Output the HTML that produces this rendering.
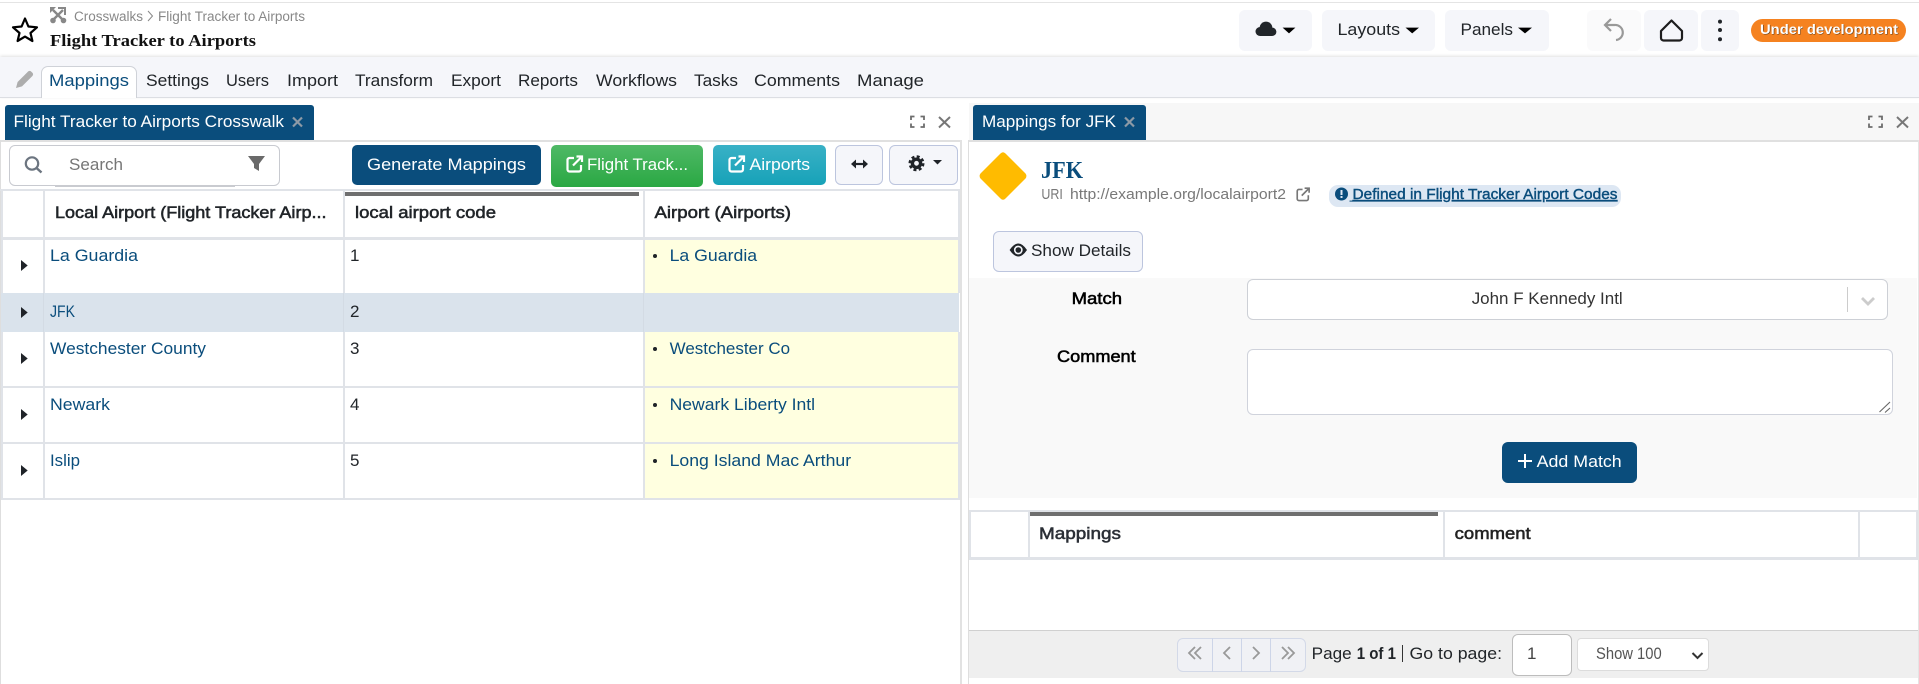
<!DOCTYPE html>
<html lang="en">
<head>
<meta charset="utf-8">
<title>Flight Tracker to Airports</title>
<style>
html,body{margin:0;padding:0;width:1919px;height:684px;overflow:hidden;background:#fff}
.b{position:absolute;box-sizing:border-box}
.nb{background:#0a4d7c;border-radius:5px}
.lt{background:#f5f6fa;border-radius:6px}
.ol{background:#f5f6fa;border:1px solid #bcc5de;border-radius:6px}
.g{background:#e0e3e8}
svg{position:absolute;left:0;top:0}
text{font-family:"Liberation Sans",sans-serif;font-size:17px;fill:#212529;white-space:pre}
.w{fill:#fff}
.a{fill:#0a4d7c}
.h{fill:#212529;stroke:#212529;stroke-width:.55px}
.s{font-family:"Liberation Serif",serif;font-weight:700}
</style>
</head>
<body>
<!-- header -->
<div class="b" style="left:0;top:2px;width:1919px;height:1px;background:#e4e4e4"></div>
<div class="b" style="left:0;top:57px;width:1919px;height:41px;background:#f5f6fa;border-bottom:1px solid #dcdee3;box-shadow:0 -1px 3px rgba(0,0,0,.12)"></div>
<div class="b" style="left:41px;top:66px;width:96px;height:32px;background:#fff;border:1px solid #cfd2d8;border-bottom:none;border-radius:7px 7px 0 0"></div>
<div class="b lt" style="left:1239px;top:10px;width:73px;height:41px"></div>
<div class="b lt" style="left:1322px;top:10px;width:113px;height:41px"></div>
<div class="b lt" style="left:1445px;top:10px;width:104px;height:41px"></div>
<div class="b" style="left:1587px;top:10px;width:54px;height:41px;background:#fafafb;border-radius:6px"></div>
<div class="b lt" style="left:1644px;top:10px;width:54px;height:41px"></div>
<div class="b lt" style="left:1701px;top:10px;width:38px;height:41px"></div>
<div class="b" style="left:1751px;top:19px;width:155px;height:23px;background:#f58220;border-radius:12px"></div>

<!-- left panel -->
<div class="b" style="left:5px;top:105px;width:309px;height:35px;background:#0a4d7c;border-radius:3px 3px 0 0"></div>
<div class="b" style="left:0;top:140px;width:962px;height:2px;background:#e0e0e0"></div>
<div class="b" style="left:960px;top:140px;width:2px;height:544px;background:#e2e2e2"></div>
<div class="b" style="left:0;top:140px;width:1px;height:544px;background:#dedede"></div>
<div class="b" style="left:9px;top:145px;width:271px;height:41px;border:1px solid #c8cad0;border-radius:6px;background:#fff"></div>
<div class="b" style="left:55px;top:185px;width:180px;height:2px;background:#c9cbd0"></div>
<div class="b nb" style="left:352px;top:145px;width:189px;height:40px"></div>
<div class="b" style="left:551px;top:145px;width:152px;height:42px;border-radius:5px;background:linear-gradient(#4fb966,#2aa843)"></div>
<div class="b" style="left:713px;top:145px;width:113px;height:40px;border-radius:5px;background:linear-gradient(#39b1c6,#17a2b8)"></div>
<div class="b ol" style="left:835px;top:145px;width:48px;height:40px"></div>
<div class="b ol" style="left:889px;top:145px;width:69px;height:40px"></div>

<!-- left table -->
<div class="b g" style="left:0;top:189px;width:960px;height:2px"></div>
<div class="b g" style="left:1px;top:237px;width:958px;height:3px"></div>
<div class="b" style="left:645px;top:240px;width:313px;height:53px;background:#ffffe0"></div>
<div class="b" style="left:1px;top:293px;width:958px;height:39px;background:#dae3ec"></div>
<div class="b" style="left:645px;top:332px;width:313px;height:54px;background:#ffffe0"></div>
<div class="b" style="left:645px;top:388px;width:313px;height:54px;background:#ffffe0"></div>
<div class="b" style="left:645px;top:444px;width:313px;height:54px;background:#ffffe0"></div>
<div class="b g" style="left:1px;top:386px;width:958px;height:2px"></div>
<div class="b g" style="left:1px;top:442px;width:958px;height:2px"></div>
<div class="b g" style="left:1px;top:498px;width:958px;height:2px"></div>
<div class="b g" style="left:1px;top:191px;width:2px;height:102px"></div>
<div class="b g" style="left:1px;top:332px;width:2px;height:168px"></div>
<div class="b g" style="left:43px;top:191px;width:2px;height:102px"></div>
<div class="b g" style="left:43px;top:332px;width:2px;height:168px"></div>
<div class="b g" style="left:343px;top:191px;width:2px;height:102px"></div>
<div class="b g" style="left:343px;top:332px;width:2px;height:168px"></div>
<div class="b g" style="left:643px;top:191px;width:2px;height:102px"></div>
<div class="b g" style="left:643px;top:332px;width:2px;height:168px"></div>
<div class="b g" style="left:958px;top:191px;width:2px;height:102px"></div>
<div class="b g" style="left:958px;top:332px;width:2px;height:168px"></div>
<div class="b" style="left:43px;top:293px;width:1px;height:39px;background:#d3dbe4"></div>
<div class="b" style="left:343px;top:293px;width:1px;height:39px;background:#d3dbe4"></div>
<div class="b" style="left:643px;top:293px;width:1px;height:39px;background:#d3dbe4"></div>
<div class="b" style="left:345px;top:192px;width:294px;height:4px;background:#6f6f6f"></div>

<!-- right panel -->
<div class="b" style="left:969px;top:103px;width:950px;height:37px;background:#f7f7f7"></div>
<div class="b" style="left:973px;top:105px;width:173px;height:35px;background:#0a4d7c;border-radius:3px 3px 0 0"></div>
<div class="b" style="left:969px;top:140px;width:950px;height:2px;background:#e0e0e0"></div>
<div class="b" style="left:968px;top:140px;width:1px;height:544px;background:#dedede"></div>
<div class="b" style="left:1918px;top:140px;width:1px;height:544px;background:#e4e4e4"></div>
<div class="b" style="left:1329px;top:185px;width:292px;height:22px;background:#dde7f3;border-radius:9px"></div>
<div class="b ol" style="left:993px;top:231px;width:150px;height:41px"></div>
<div class="b" style="left:969px;top:278px;width:948px;height:220px;background:#f9f9f9"></div>
<div class="b" style="left:1247px;top:279px;width:641px;height:41px;background:#fff;border:1px solid #cdd0d6;border-radius:6px"></div>
<div class="b" style="left:1847px;top:287px;width:1px;height:25px;background:#ccc"></div>
<div class="b" style="left:1247px;top:349px;width:646px;height:66px;background:#fff;border:1px solid #d0d3dc;border-radius:6px"></div>
<div class="b nb" style="left:1502px;top:442px;width:135px;height:41px;border-radius:6px"></div>

<!-- right table -->
<div class="b g" style="left:969px;top:510px;width:949px;height:2px"></div>
<div class="b g" style="left:969px;top:557px;width:949px;height:3px"></div>
<div class="b g" style="left:969px;top:510px;width:2px;height:49px"></div>
<div class="b g" style="left:1028px;top:510px;width:2px;height:49px"></div>
<div class="b g" style="left:1443px;top:510px;width:2px;height:49px"></div>
<div class="b g" style="left:1858px;top:510px;width:2px;height:49px"></div>
<div class="b g" style="left:1916px;top:510px;width:2px;height:49px"></div>
<div class="b" style="left:1030px;top:512px;width:408px;height:4px;background:#6f6f6f"></div>

<!-- footer -->
<div class="b" style="left:969px;top:630px;width:949px;height:48px;background:#efefef;border-top:1px solid #d0d0d0"></div>
<div class="b" style="left:1177px;top:638px;width:129px;height:34px;background:#f0f1f5;border:1px solid #d3d9e8;border-radius:6px"></div>
<div class="b" style="left:1212px;top:638px;width:1px;height:34px;background:#cdd5e8"></div>
<div class="b" style="left:1241px;top:638px;width:1px;height:34px;background:#cdd5e8"></div>
<div class="b" style="left:1270px;top:638px;width:1px;height:34px;background:#cdd5e8"></div>
<div class="b" style="left:1512px;top:634px;width:60px;height:42px;background:#fff;border:1px solid #bdbdbd;border-radius:6px"></div>
<div class="b" style="left:1577px;top:638px;width:132px;height:33px;background:#fff;border:1px solid #dcdcdc;border-radius:4px"></div>

<svg width="1919" height="684" viewBox="0 0 1919 684" xmlns="http://www.w3.org/2000/svg">
<!-- header -->
<polygon points="25,18.5 28.4,26.5 37,27.3 30.5,33 32.4,41 25,36.6 17.6,41 19.5,33 13,27.3 21.6,26.5" fill="none" stroke="#000" stroke-width="2.2" stroke-linejoin="round"/>
<g stroke="#888" stroke-width="2.4" fill="none">
<path d="M53 10 L63 20 M63 10 L53 20"/>
<path d="M58 8 H65 V15" stroke-width="2"/>
</g>
<g fill="#888"><polygon points="50,7 56,7 50,13"/><circle cx="53" cy="20.5" r="2.8"/><circle cx="63.5" cy="20.5" r="2.8"/></g>
<text x="74" y="21" style="font-size:13.5px;fill:#888" textLength="69" lengthAdjust="spacingAndGlyphs">Crosswalks</text>
<path d="M148 11 l4.5 5 l-4.5 5" fill="none" stroke="#888" stroke-width="1"/>
<text x="158" y="21" style="font-size:13.5px;fill:#888" textLength="147" lengthAdjust="spacingAndGlyphs">Flight Tracker to Airports</text>
<text class="s" x="50" y="46" style="font-size:17px;fill:#111" textLength="206" lengthAdjust="spacingAndGlyphs">Flight Tracker to Airports</text>

<path d="M16 88 l1.6-6 l10.4-10.4 q1.6-1.4 3.2 0 l1.2 1.2 q1.4 1.6 0 3.2 l-10.4 10.4 z" fill="#adadad"/>
<text class="a" x="49" y="86" textLength="80" lengthAdjust="spacingAndGlyphs">Mappings</text>
<text x="146" y="86" textLength="63" lengthAdjust="spacingAndGlyphs">Settings</text>
<text x="226" y="86" textLength="43" lengthAdjust="spacingAndGlyphs">Users</text>
<text x="287" y="86" textLength="51" lengthAdjust="spacingAndGlyphs">Import</text>
<text x="355" y="86" textLength="78" lengthAdjust="spacingAndGlyphs">Transform</text>
<text x="451" y="86" textLength="50" lengthAdjust="spacingAndGlyphs">Export</text>
<text x="518" y="86" textLength="60" lengthAdjust="spacingAndGlyphs">Reports</text>
<text x="596" y="86" textLength="81" lengthAdjust="spacingAndGlyphs">Workflows</text>
<text x="694" y="86" textLength="44" lengthAdjust="spacingAndGlyphs">Tasks</text>
<text x="754" y="86" textLength="86" lengthAdjust="spacingAndGlyphs">Comments</text>
<text x="857" y="86" textLength="67" lengthAdjust="spacingAndGlyphs">Manage</text>

<!-- top right -->
<g fill="#212529"><circle cx="1260" cy="31.5" r="4.5"/><circle cx="1266" cy="28" r="6.4"/><circle cx="1272.2" cy="31.8" r="4.2"/><rect x="1260" y="30" width="12" height="6"/></g>
<polygon points="1282.6,27.6 1295.4,27.6 1289,33.4" fill="#000"/>
<text x="1337.5" y="35" textLength="62.5" lengthAdjust="spacingAndGlyphs">Layouts</text>
<polygon points="1405.5,27.6 1419,27.6 1412.2,33.4" fill="#000"/>
<text x="1460.5" y="35" textLength="52.5" lengthAdjust="spacingAndGlyphs">Panels</text>
<polygon points="1518,27.6 1532,27.6 1525,33.4" fill="#000"/>
<path d="M1611 19 L1605 25 L1611 31 M1605 25 H1614.5 a7.5 7.5 0 0 1 1.5 15" fill="none" stroke="#999" stroke-width="2.2"/>
<path d="M1661 31 L1671.5 20.5 L1682 31 V38 a2.5 2.5 0 0 1-2.5 2.5 H1663.5 a2.5 2.5 0 0 1-2.5-2.5 Z" fill="none" stroke="#1d1d1d" stroke-width="2.2" stroke-linejoin="round"/>
<circle cx="1720" cy="21.6" r="2" fill="#212529"/><circle cx="1720" cy="30" r="2" fill="#212529"/><circle cx="1720" cy="39.3" r="2" fill="#212529"/>
<text x="1760.6" y="34.6" style="font-size:14px;font-weight:700;fill:#5a3a1a" textLength="138" lengthAdjust="spacingAndGlyphs">Under development</text>
<text x="1760" y="34" style="font-size:14px;font-weight:700;fill:#fff" textLength="138" lengthAdjust="spacingAndGlyphs">Under development</text>

<!-- left tab strip -->
<text class="w" x="13.5" y="127" textLength="270.5" lengthAdjust="spacingAndGlyphs">Flight Tracker to Airports Crosswalk</text>
<path d="M293 117.5 L302 126.5 M302 117.5 L293 126.5" stroke="#8d9aa6" stroke-width="2.2"/>
<path d="M911 120 v-3.5 h3.5 M920.5 116.5 h3.5 v3.5 M924 123.5 v3.5 h-3.5 M914.5 127 h-3.5 v-3.5" fill="none" stroke="#6d6d6d" stroke-width="1.8"/>
<path d="M939 117 L950 127.5 M950 117 L939 127.5" stroke="#777" stroke-width="2"/>

<!-- toolbar -->
<circle cx="32" cy="163.5" r="6.2" fill="none" stroke="#6c7580" stroke-width="2.2"/>
<path d="M36.5 168 L41.5 172.5" stroke="#6c7580" stroke-width="2.4"/>
<text x="69" y="170" style="fill:#767676" textLength="54" lengthAdjust="spacingAndGlyphs">Search</text>
<polygon points="248,156 265,156 259,164 259,171 254,168 254,164" fill="#6a6a6a"/>
<text class="w" x="367" y="170" textLength="159" lengthAdjust="spacingAndGlyphs">Generate Mappings</text>
<g transform="translate(566,155)" fill="none" stroke="#fff" stroke-width="2.2"><path d="M8 3H3.5a2 2 0 0 0-2 2v9.5a2 2 0 0 0 2 2H13a2 2 0 0 0 2-2V10 M7 10.5 L15.5 2 M10.5 1.5h5.5v5.5"/></g>
<text class="w" x="587" y="170" textLength="101" lengthAdjust="spacingAndGlyphs">Flight Track...</text>
<g transform="translate(728,155)" fill="none" stroke="#fff" stroke-width="2.2"><path d="M8 3H3.5a2 2 0 0 0-2 2v9.5a2 2 0 0 0 2 2H13a2 2 0 0 0 2-2V10 M7 10.5 L15.5 2 M10.5 1.5h5.5v5.5"/></g>
<text class="w" x="749.5" y="170" textLength="60.5" lengthAdjust="spacingAndGlyphs">Airports</text>
<path d="M854 164 H865" stroke="#1f2328" stroke-width="2.2"/>
<polygon points="851,164 856,159.5 856,168.5" fill="#1f2328"/><polygon points="868,164 863,159.5 863,168.5" fill="#1f2328"/>
<circle cx="916.5" cy="163.3" r="5.8" fill="#1f2328"/>
<circle cx="916.5" cy="163.3" r="6.8" fill="none" stroke="#1f2328" stroke-width="2.4" stroke-dasharray="3 2.34"/>
<circle cx="916.5" cy="163.3" r="2.4" fill="#f5f6fa"/>
<polygon points="933,160 942,160 937.5,164.5" fill="#1f2328"/>

<!-- left table text -->
<text class="h" x="55" y="218" textLength="271.5" lengthAdjust="spacingAndGlyphs">Local Airport (Flight Tracker Airp...</text>
<text class="h" x="355" y="218" textLength="141" lengthAdjust="spacingAndGlyphs">local airport code</text>
<text class="h" x="654.5" y="218" textLength="136.5" lengthAdjust="spacingAndGlyphs">Airport (Airports)</text>

<g fill="#1f2328">
<polygon points="21,260 27.7,265.5 21,271"/><polygon points="21,307 27.7,312.5 21,318"/><polygon points="21,353 27.7,358.5 21,364"/><polygon points="21,409 27.7,414.5 21,420"/><polygon points="21,465 27.7,470.5 21,476"/>
<circle cx="655" cy="256" r="2"/><circle cx="655" cy="349" r="2"/><circle cx="655" cy="405" r="2"/><circle cx="655" cy="461" r="2"/>
</g>
<text class="a" x="50" y="261" textLength="88" lengthAdjust="spacingAndGlyphs">La Guardia</text>
<text class="a" x="50" y="317" textLength="25" lengthAdjust="spacingAndGlyphs">JFK</text>
<text class="a" x="50" y="354" textLength="156" lengthAdjust="spacingAndGlyphs">Westchester County</text>
<text class="a" x="50" y="410" textLength="60" lengthAdjust="spacingAndGlyphs">Newark</text>
<text class="a" x="50" y="466" textLength="30" lengthAdjust="spacingAndGlyphs">Islip</text>
<text x="350" y="261">1</text>
<text x="350" y="317">2</text>
<text x="350" y="354">3</text>
<text x="350" y="410">4</text>
<text x="350" y="466">5</text>
<text class="a" x="669.6" y="261" textLength="87.5" lengthAdjust="spacingAndGlyphs">La Guardia</text>
<text class="a" x="669.6" y="354" textLength="120.5" lengthAdjust="spacingAndGlyphs">Westchester Co</text>
<text class="a" x="669.6" y="410" textLength="145.5" lengthAdjust="spacingAndGlyphs">Newark Liberty Intl</text>
<text class="a" x="669.6" y="466" textLength="181.5" lengthAdjust="spacingAndGlyphs">Long Island Mac Arthur</text>

<!-- right panel -->
<text class="w" x="982" y="127" textLength="134" lengthAdjust="spacingAndGlyphs">Mappings for JFK</text>
<path d="M1125 117.5 L1134 126.5 M1134 117.5 L1125 126.5" stroke="#8d9aa6" stroke-width="2.2"/>
<path d="M1869 120 v-3.5 h3.5 M1878.5 116.5 h3.5 v3.5 M1882 123.5 v3.5 h-3.5 M1872.5 127 h-3.5 v-3.5" fill="none" stroke="#6d6d6d" stroke-width="1.8"/>
<path d="M1897 117 L1908 127.5 M1908 117 L1897 127.5" stroke="#777" stroke-width="2"/>

<path d="M1000.5 153.5 q2.5-2.5 5 0 L1025.5 173.5 q1.8 2.5 0 5 L1005.5 198.5 q-2.5 2.5-5 0 L980.5 178.5 q-1.8-2.5 0-5 Z" fill="#ffbb00"/>
<text class="s a" x="1041" y="178" style="font-size:24px" textLength="42" lengthAdjust="spacingAndGlyphs">JFK</text>
<text x="1041.4" y="199" style="font-size:14.5px;fill:#787878" textLength="21.5" lengthAdjust="spacingAndGlyphs">URI</text>
<text x="1070" y="199" style="font-size:14.5px;fill:#787878" textLength="216" lengthAdjust="spacingAndGlyphs">http://example.org/localairport2</text>
<g transform="translate(1296,187) scale(.82)" fill="none" stroke="#777" stroke-width="2"><path d="M8 3H3.5a2 2 0 0 0-2 2v9.5a2 2 0 0 0 2 2H13a2 2 0 0 0 2-2V10 M7 10.5 L15.5 2 M10.5 1.5h5.5v5.5"/></g>
<circle cx="1341.5" cy="194" r="6.5" fill="#0a4d7c"/>
<rect x="1340.5" y="190" width="2" height="5" fill="#dde7f3"/><rect x="1340.5" y="196" width="2" height="2" fill="#dde7f3"/>
<rect x="1349.5" y="200.6" width="3" height="1" fill="#0a4d7c"/>
<text x="1352.5" y="199" style="font-size:14.5px;fill:#0a4d7c;stroke:#0a4d7c;stroke-width:.4px;text-decoration:underline" textLength="265" lengthAdjust="spacingAndGlyphs">Defined in Flight Tracker Airport Codes</text>

<path d="M1009.6 250 Q1018.3 237 1027 250 Q1018.3 263 1009.6 250 Z" fill="#212529"/>
<circle cx="1018.3" cy="250" r="4.4" fill="#f5f6fa"/><circle cx="1018.3" cy="250" r="2.8" fill="#212529"/>
<text x="1031" y="256" textLength="100" lengthAdjust="spacingAndGlyphs">Show Details</text>

<text x="1071.6" y="304" style="fill:#000;stroke:#000;stroke-width:.55px" textLength="50.4" lengthAdjust="spacingAndGlyphs">Match</text>
<text x="1471.7" y="304" style="fill:#333" textLength="151" lengthAdjust="spacingAndGlyphs">John F Kennedy Intl</text>
<path d="M1862 298 L1868 304 L1874 298" fill="none" stroke="#ccc" stroke-width="2.8"/>
<text x="1057" y="362" style="fill:#000;stroke:#000;stroke-width:.55px" textLength="78.7" lengthAdjust="spacingAndGlyphs">Comment</text>
<path d="M1879.5 412 L1890 402 M1885 412.5 L1890 408" stroke="#666" stroke-width="1.1"/>
<path d="M1518 461 H1532 M1525 454 V468" stroke="#fff" stroke-width="2"/>
<text class="w" x="1536.7" y="467" textLength="85" lengthAdjust="spacingAndGlyphs">Add Match</text>

<text x="1039" y="539" style="fill:#2b2f36;stroke:#2b2f36;stroke-width:.55px" textLength="82" lengthAdjust="spacingAndGlyphs">Mappings</text>
<text x="1454.7" y="539" style="fill:#222;stroke:#222;stroke-width:.55px" textLength="76" lengthAdjust="spacingAndGlyphs">comment</text>

<!-- footer -->
<g fill="none" stroke="#999" stroke-width="1.8">
<path d="M1195 647 l-6 6 l6 6 M1201 647 l-6 6 l6 6"/>
<path d="M1230 647 l-6 6 l6 6"/>
<path d="M1253 647 l6 6 l-6 6"/>
<path d="M1282 647 l6 6 l-6 6 M1288 647 l6 6 l-6 6"/>
</g>
<text x="1311.7" y="659" textLength="40" lengthAdjust="spacingAndGlyphs">Page</text>
<text x="1356.7" y="659" style="font-weight:700" textLength="39.3" lengthAdjust="spacingAndGlyphs">1 of 1</text>
<rect x="1402" y="645" width="1" height="17" fill="#333"/>
<text x="1409.5" y="659" textLength="92.5" lengthAdjust="spacingAndGlyphs">Go to page:</text>
<text x="1527" y="659" style="fill:#444">1</text>
<text x="1596" y="659" style="fill:#555" textLength="65.7" lengthAdjust="spacingAndGlyphs">Show 100</text>
<path d="M1692.5 653 L1697.5 658 L1702.5 653" fill="none" stroke="#333" stroke-width="2"/>
</svg>
</body>
</html>
